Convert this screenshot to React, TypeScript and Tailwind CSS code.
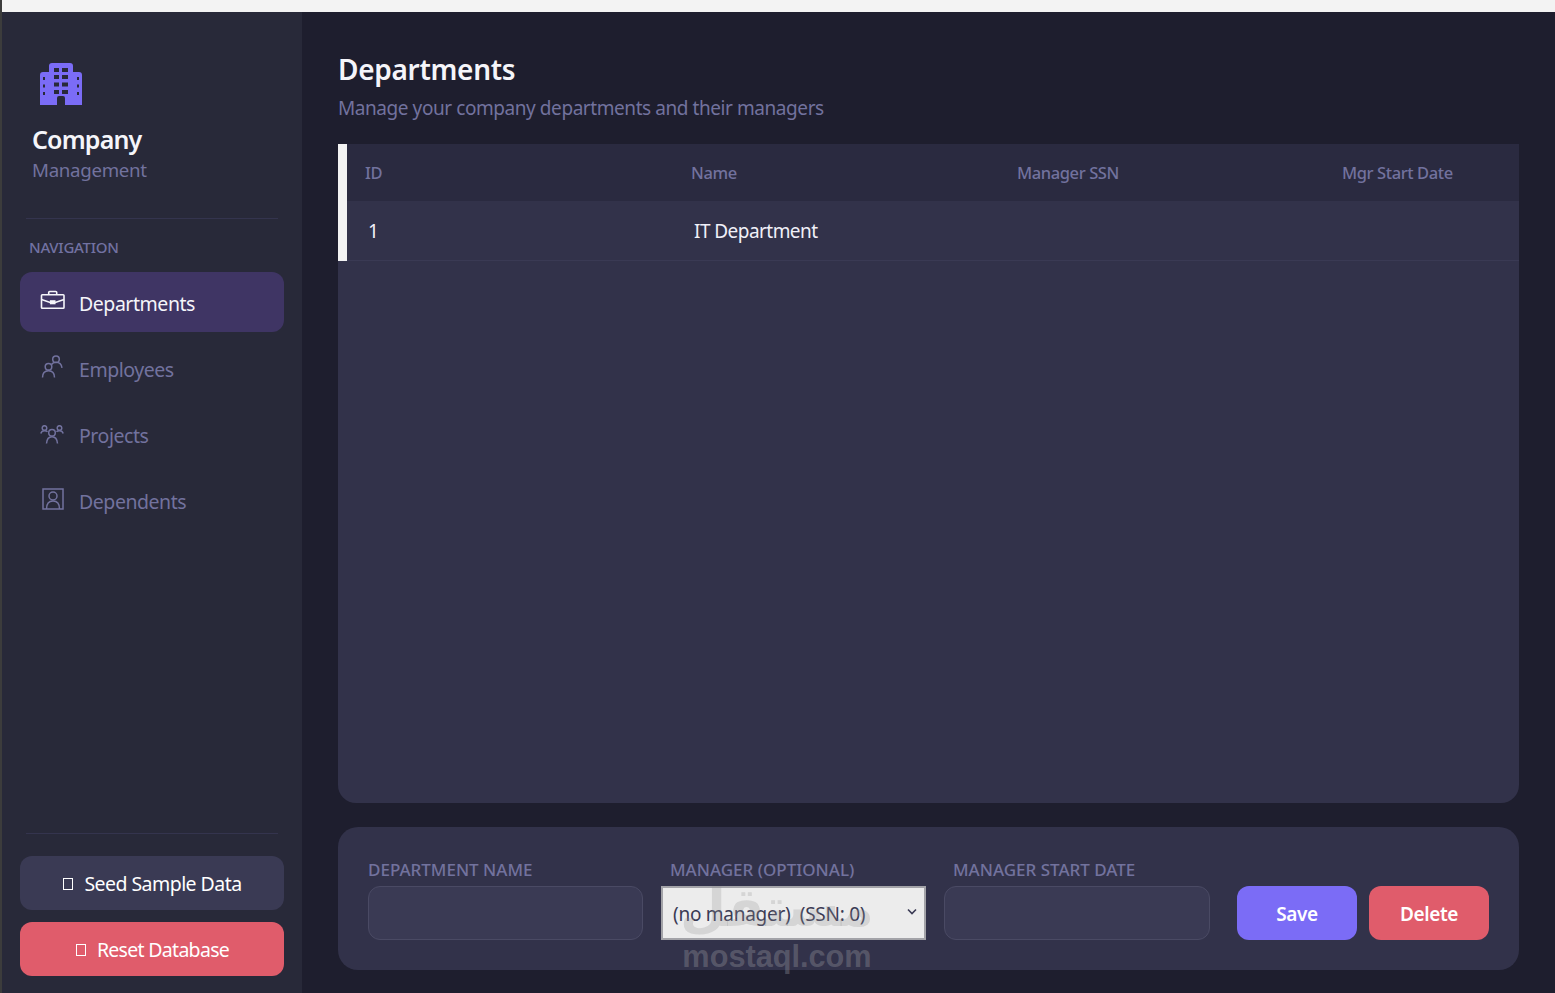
import React from "react";

const BuildingIcon = () => (
  <svg width="42" height="42" viewBox="0 0 42 42" className="block">
    <path
      fillRule="evenodd"
      fill="#7b6cf6"
      d="M0 42V12a3 3 0 0 1 3-3h6V3a3 3 0 0 1 3-3h18a3 3 0 0 1 3 3v6h6a3 3 0 0 1 3 3v30H25v-7a2 2 0 0 0-2-2h-4a2 2 0 0 0-2 2v7ZM14 5v4h5V5Zm8 0v4h6V5ZM14 12v4h5v-4Zm8 0v4h6v-4ZM14 19.500v4h5v-4Zm8 0v4h6v-4ZM14 27v4h5v-4Zm8 0v4h6v-4ZM3 14v3h2v-3Zm0 7.500v3h2v-3ZM3 29v3h2v-3Zm34-15v3h2v-3Zm0 7.500v3h2v-3Zm0 7.500v3h2v-3Z"
    />
  </svg>
);

const BriefcaseIcon = () => (
  <svg width="26" height="20" viewBox="0 0 26 20" fill="none" stroke="currentColor" strokeWidth="1.600" className="block">
    <rect x="1.500" y="4.800" width="22.500" height="13.500" rx="0.800" />
    <path d="M8.700 4.800V2.500a1 1 0 0 1 1-1h6a1 1 0 0 1 1 1v2.300" />
    <path d="M1.500 9.500 10.200 12.500h5l8.800-3" />
    <rect x="10.700" y="11" width="4" height="2.500" fill="currentColor" />
  </svg>
);

const EmployeesIcon = () => (
  <svg width="22" height="24" viewBox="0 0 22 24" fill="none" stroke="currentColor" strokeWidth="1.500" className="block">
    <circle cx="15" cy="4.200" r="3.300" />
    <circle cx="7.500" cy="11.800" r="3.300" />
    <path d="M1.500 22.500c0-4 2-6.800 6-6.800s6 2.800 6 6.800" />
    <path d="M10.500 9.500c.8-1.300 2.500-2.200 4.500-2.200 3.800 0 5.500 2 6 5.500" />
  </svg>
);

const ProjectsIcon = () => (
  <svg width="24" height="20" viewBox="0 0 24 20" fill="none" stroke="currentColor" strokeWidth="1.500" className="block">
    <circle cx="4.500" cy="3" r="2.300" />
    <circle cx="19.500" cy="3" r="2.300" />
    <circle cx="12" cy="7.800" r="3.300" />
    <path d="M.800 8.500c.5-1.800 1.700-2.800 3.700-2.800 1.300 0 2.300.3 3 1" />
    <path d="M23.200 8.500c-.5-1.800-1.700-2.800-3.700-2.800-1.300 0-2.300.3-3 1" />
    <path d="M6.500 18.500c.3-4 2-6.800 5.500-6.800s5.200 2.800 5.500 6.800" />
  </svg>
);

const DependentsIcon = () => (
  <svg width="22" height="22" viewBox="0 0 22 22" fill="none" stroke="currentColor" strokeWidth="1.500" className="block">
    <rect x="1" y="1" width="20" height="20" />
    <circle cx="11" cy="8" r="4" />
    <path d="M4.500 21c0-4.800 2.300-8 6.500-8s6.500 3.200 6.500 8" />
  </svg>
);

const Tofu = () => <span className="inline-block w-[10px] h-[12px] border border-white ml-[1px] mr-[11px]" />;

const nav = [
  { label: "Departments", icon: <BriefcaseIcon />, active: true, offset: "-mt-[4px]" },
  { label: "Employees", icon: <EmployeesIcon />, offset: "pl-[1px] -mt-[2px]" },
  { label: "Projects", icon: <ProjectsIcon />, offset: "mt-[2px]" },
  { label: "Dependents", icon: <DependentsIcon />, offset: "pl-[2px] -mt-[2px]" },
];

const Sidebar = () => (
  <aside className="w-[300px] shrink-0 bg-[#282939] flex flex-col px-[18px]">
    <div className="pt-[51px] pl-[12px]">
      <div className="pl-[8px]">
        <BuildingIcon />
      </div>
      <div className="mt-[17px] text-[25px] leading-[34px] font-semibold text-[#f5f5fa] tracking-[-0.85px]">Company</div>
      <div className="mt-[1px] text-[18.700px] leading-[26px] text-[#72729e] tracking-[-0.3px]">Management</div>
    </div>
    <div className="mx-[6px] mt-[35px] border-t border-[#34344e]" />
    <div className="pl-[9px] mt-[18px] text-[15px] leading-[20px] font-medium text-[#7272a2] tracking-[-0.25px]">NAVIGATION</div>
    <nav className="mt-[15px] flex flex-col gap-[6px]">
      {nav.map((item) => (
        <div
          key={item.label}
          className={`h-[60px] rounded-[12px] flex items-center pl-[20px] ${
            item.active ? "bg-[#3f3564] text-[#f5f5fa]" : "text-[#72729e]"
          }`}
        >
          <span className={`w-[39px] ${item.offset}`}>{item.icon}</span>
          <span className="mt-[4px] text-[19.500px] tracking-[-0.45px]">{item.label}</span>
        </div>
      ))}
    </nav>
    <div className="mt-auto mx-[6px] border-t border-[#34344e]" />
    <div className="mt-[22px] mb-[17px] flex flex-col gap-[12px]">
      <button className="h-[54px] rounded-[12px] bg-[#3a3a54] text-white text-[19.500px] tracking-[-0.55px] flex items-center justify-center pt-[2px]">
        <Tofu />
        Seed Sample Data
      </button>
      <button className="h-[54px] rounded-[12px] bg-[#e05c6b] text-white text-[19.500px] tracking-[-0.7px] flex items-center justify-center pt-[2px]">
        <Tofu />
        Reset Database
      </button>
    </div>
  </aside>
);

const headers = ["ID", "Name", "Manager SSN", "Mgr Start Date"];

const DepartmentsTable = () => (
  <div className="mt-[18px] h-[659px] rounded-b-[18px] bg-[#32324a] overflow-hidden">
    <div className="border-l-[9px] border-[#f3f3f3]">
      <div className="h-[57px] bg-[#2a2a40] grid grid-cols-[326px_326px_325px_1fr] items-center pl-[18px] pt-[2px]">
        {headers.map((h) => (
          <div key={h} className="text-[16.500px] font-medium text-[#72729e] tracking-[-0.4px] whitespace-nowrap">
            {h}
          </div>
        ))}
      </div>
      <div className="h-[60px] border-b border-[#3a3a54] grid grid-cols-[326px_326px_325px_1fr] items-center pl-[21px] pt-[2px] text-[19px] text-[#f0f0f8] tracking-[-0.55px]">
        <div>1</div>
        <div>IT Department</div>
        <div />
        <div />
      </div>
    </div>
  </div>
);

const labelClass = "text-[17px] leading-[24px] font-medium text-[#72729e] whitespace-nowrap";
const inputClass = "mt-[4px] h-[54px] w-full rounded-[12px] bg-[#3a3a54] border border-[#4a4a64]";

const DepartmentForm = () => (
  <div className="relative mt-[24px] h-[143px] rounded-[20px] bg-[#32324a] pl-[30px] pt-[31px] flex items-start">
    <div className="w-[275px] flex flex-col">
      <label className={labelClass}>DEPARTMENT NAME</label>
      <input className={inputClass} />
    </div>
    <div className="relative w-[265px] ml-[18px] flex flex-col">
      <label className={`pl-[9px] ${labelClass}`}>MANAGER (OPTIONAL)</label>
      <select className="appearance-none mt-[4px] h-[54px] w-full bg-[#ececec] border-[2px] border-[#a3a3a8] pl-[10px] pt-[2px] text-[19px] text-[#3a3a54] tracking-[-0.27px]">
        <option>(no manager)&nbsp; (SSN: 0)</option>
      </select>
      <svg width="10" height="7" viewBox="0 0 10 7" fill="none" stroke="#3a3a54" strokeWidth="1.600" className="absolute left-[246px] top-[50px]">
        <path d="M1 1.500 5 5.500 9 1.500" />
      </svg>
    </div>
    <div className="w-[266px] ml-[18px] flex flex-col">
      <label className={`pl-[9px] ${labelClass}`}>MANAGER START DATE</label>
      <input className={inputClass} />
    </div>
    <button className="ml-[27px] mt-[28px] w-[120px] h-[54px] pt-[2px] rounded-[12px] bg-[#7b6cf6] text-white text-[19px] font-semibold tracking-[-0.4px]">Save</button>
    <button className="ml-[12px] mt-[28px] w-[120px] h-[54px] pt-[2px] rounded-[12px] bg-[#e05c6b] text-white text-[19px] font-semibold tracking-[-0.4px]">Delete</button>
    {/* watermark */}
    <div className="absolute left-[344px] top-[53px] w-[190px] flex flex-col items-center pointer-events-none">
      <div className="text-[53px] leading-[56px] font-bold text-[#909090]/25" dir="rtl" style={{ fontFamily: '"DejaVu Sans", sans-serif' }}>مستقل</div>
      <div className="text-[30.700px] leading-[36px] font-bold text-[#909098]/40 mt-[3px]" style={{ fontFamily: '"Liberation Sans", sans-serif' }}>mostaql.com</div>
    </div>
  </div>
);

export default function App() {
  return (
    <div className="h-[993px] w-[1555px] overflow-hidden flex bg-[#1e1e2e] font-['Noto_Sans',sans-serif]">
      <div className="w-[2px] shrink-0 bg-[#3c3c3c]" />
      <div className="flex-1 flex flex-col">
        <div className="h-[12px] shrink-0 bg-[#f3f3f3]" />
        <div className="flex-1 flex min-h-0">
          <Sidebar />
          <main className="flex-1 px-[36px] pt-[35px]">
            <h1 className="text-[28px] leading-[44px] font-semibold text-[#f5f5fa] tracking-[-0.3px]">Departments</h1>
            <p className="text-[19px] leading-[35px] text-[#72729e] tracking-[-0.43px]">Manage your company departments and their managers</p>
            <DepartmentsTable />
            <DepartmentForm />
          </main>
        </div>
      </div>
    </div>
  );
}
